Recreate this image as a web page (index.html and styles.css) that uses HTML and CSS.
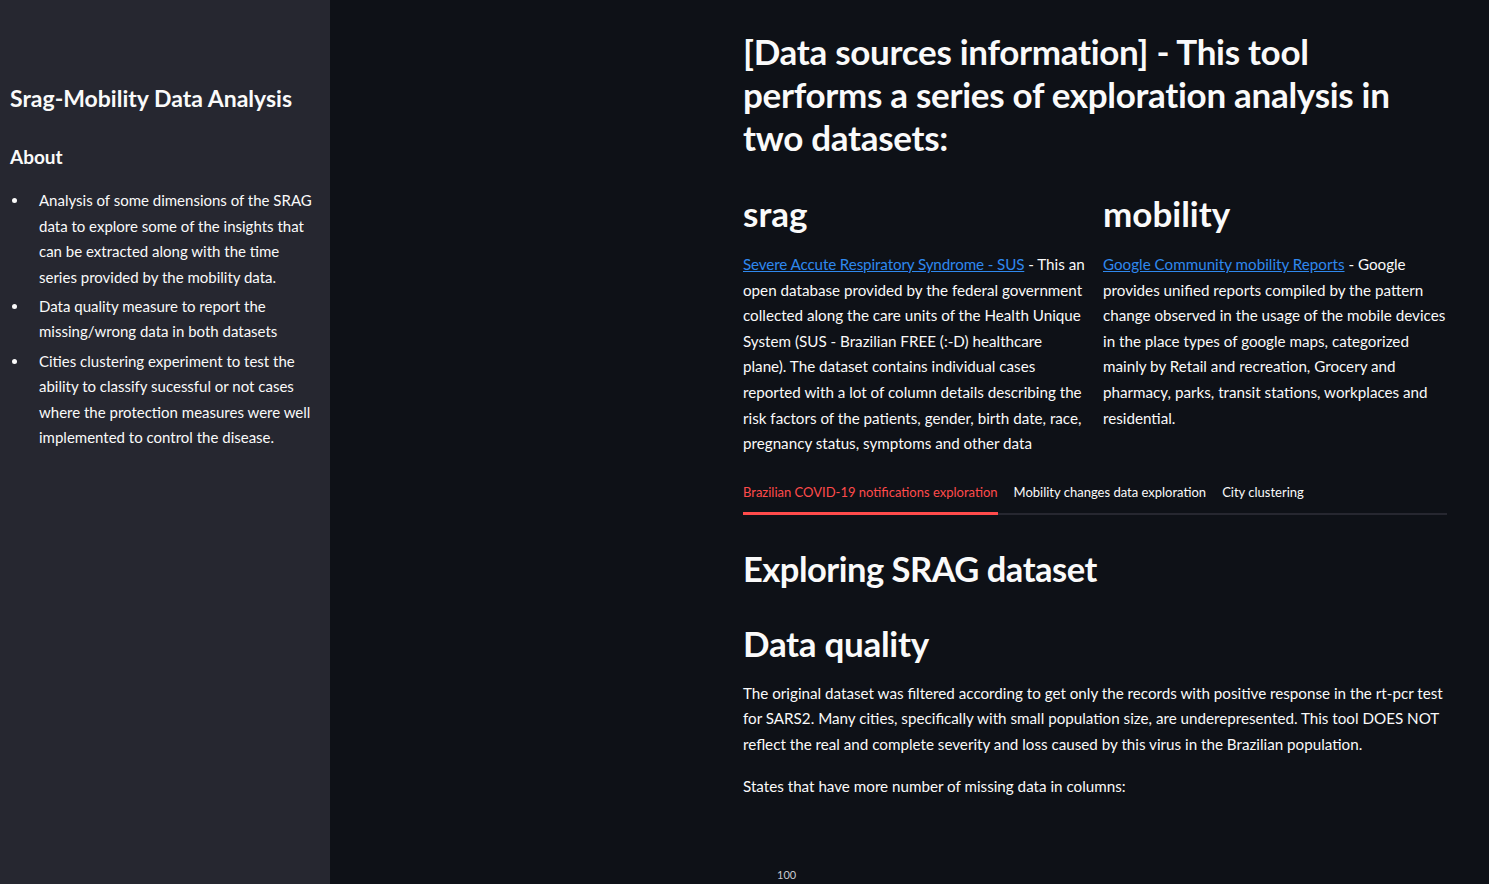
FILE: index.html
```html
<!DOCTYPE html>
<html>
<head>
<meta charset="utf-8">
<link rel="stylesheet" href="styles.css">
</head>
<body>
<aside class="sidebar">
  <h1 class="side-title">Srag-Mobility Data Analysis</h1>
  <h3 class="side-sub">About</h3>
  <ul class="side-list">
    <li>Analysis of some dimensions of the SRAG data to explore some of the insights that can be extracted along with the time series provided by the mobility data.</li>
    <li>Data quality measure to report the missing/wrong data in both datasets</li>
    <li>Cities clustering experiment to test the ability to classify sucessful or not cases where the protection measures were well implemented to control the disease.</li>
  </ul>
</aside>
<main class="main">
  <div class="block">
    <h1 class="h1">[Data sources information] - This tool performs a series of exploration analysis in two datasets:</h1>
    <div class="cols">
      <div class="col">
        <h2 class="h2">srag</h2>
        <p class="p"><a class="link tight" href="#">Severe Accute Respiratory Syndrome - SUS</a> - This an open database provided by the federal government collected along the care units of the Health Unique System (SUS - Brazilian FREE (:-D) healthcare plane). The dataset contains individual cases reported with a lot of column details describing the risk factors of the patients, gender, birth date, race, pregnancy status, symptoms and other data</p>
      </div>
      <div class="col">
        <h2 class="h2">mobility</h2>
        <p class="p"><a class="link" href="#">Google Community mobility Reports</a> - Google provides unified reports compiled by the pattern change observed in the usage of the mobile devices in the place types of google maps, categorized mainly by Retail and recreation, Grocery and pharmacy, parks, transit stations, workplaces and residential.</p>
      </div>
    </div>
    <div class="tabs">
      <div class="tab active">Brazilian COVID-19 notifications exploration</div>
      <div class="tab">Mobility changes data exploration</div>
      <div class="tab">City clustering</div>
    </div>
    <h1 class="h1 sec">Exploring SRAG dataset</h1>
    <h1 class="h1 sec2">Data quality</h1>
    <p class="p">The original dataset was filtered according to get only the records with positive response in the rt-pcr test for SARS2. Many cities, specifically with small population size, are underepresented. This tool DOES NOT reflect the real and complete severity and loss caused by this virus in the Brazilian population.</p>
    <p class="p states">States that have more number of missing data in columns:</p>
    <div class="chart">
      <span class="axis">100</span>
    </div>
  </div>
</main>
</body>
</html>
```
FILE: styles.css
```css
* { box-sizing: border-box; }
html, body { margin: 0; padding: 0; }
body {
  display: flex;
  width: 1489px;
  height: 884px;
  overflow: hidden;
  background: #0e1117;
  color: #fafafa;
  font-family: "Lato", "Liberation Sans", sans-serif;
  font-size: 16px;
}
.sidebar {
  width: 330px;
  flex: 0 0 330px;
  background: #262730;
  padding: 82px 10px 0 10px;
}
.side-title {
  margin: 0;
  font-size: 23px;
  line-height: 32px;
  font-weight: 700;
}
.side-sub {
  margin: 29px 0 0 0;
  font-size: 19px;
  line-height: 28px;
  font-weight: 700;
}
.side-list {
  margin: 17px 0 0 0;
  padding-left: 29px;
  list-style: none;
  font-size: 15px;
  line-height: 25.6px;
}
.side-list li {
  position: relative;
  margin: 0 0 3.5px 0;
}
.side-list li::before {
  content: "";
  position: absolute;
  left: -27px;
  top: 10px;
  width: 5px;
  height: 5px;
  border-radius: 50%;
  background: #fafafa;
}
.main {
  flex: 1;
  padding: 30px 0 0 413px;
}
.block { width: 704px; }
.h1 {
  margin: 0;
  font-size: 35px;
  line-height: 43px;
  font-weight: 700;
  letter-spacing: -0.3px;
}
.cols {
  display: flex;
  gap: 16px;
  margin-top: 33px;
}
.col { flex: 1; min-width: 0; }
.h2 {
  margin: 0 0 17px 0;
  font-size: 35px;
  line-height: 43px;
  font-weight: 700;
}
.p {
  margin: 0;
  font-size: 15.2px;
  line-height: 25.6px;
}
.link { color: #2f88ee; text-decoration: underline; }
.link.tight { letter-spacing: -0.12px; }
.tabs {
  display: flex;
  gap: 16px;
  margin-top: 15px;
  border-bottom: 2px solid #262730;
}
.tab {
  position: relative;
  font-size: 13px;
  line-height: 20px;
  padding: 10px 0 11px 0;
  color: #fafafa;
}
.tab.active { color: #ff4b4b; }
.tab.active::after {
  content: "";
  position: absolute;
  left: 0; right: 0; bottom: -2px;
  height: 3px;
  background: #ff4b4b;
}
.sec { margin-top: 32px; letter-spacing: -0.5px; font-size: 34.5px; }
.sec2 { margin-top: 32px; margin-bottom: 16px; }
.states { margin-top: 16px; }
.chart {
  height: 80px;
  position: relative;
}
.axis {
  position: absolute;
  left: 34px;
  top: 69px;
  font-size: 11px;
  line-height: 13px;
  color: #c9cbd1;
}
```
